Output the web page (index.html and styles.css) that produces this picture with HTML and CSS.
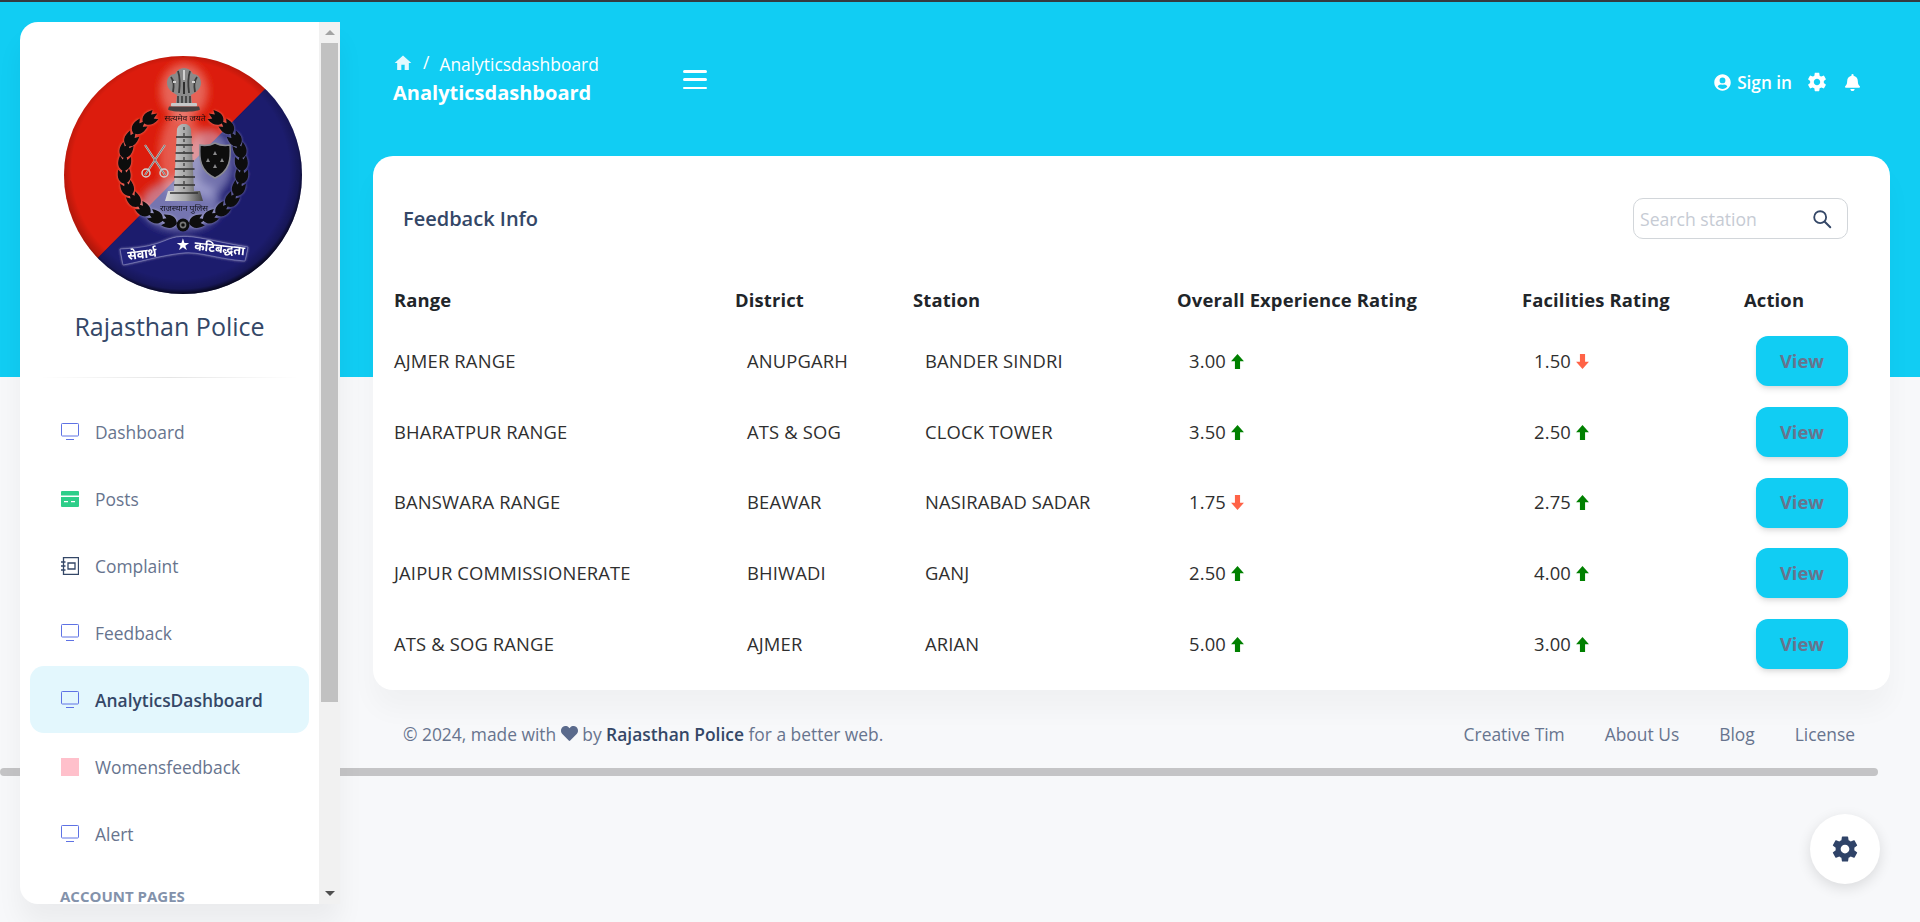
FILE: index.html
```html
<!DOCTYPE html>
<html lang="en">
<head>
<meta charset="utf-8">
<title>Analyticsdashboard</title>
<link rel="stylesheet" href="styles.css">
</head>
<body>
<svg class="defs" width="0" height="0" aria-hidden="true">
  <defs>
    <symbol id="i-monitor" viewBox="0 0 18 18">
      <rect x=".5" y=".5" width="17" height="12.5" rx=".8" fill="none" stroke="#5e72e4" stroke-width="1"/>
      <path d="M5 16.500h8" stroke="#5e72e4" stroke-width="1" fill="none"/>
    </symbol>
    <symbol id="i-gear" viewBox="0 0 24 24">
      <path d="M19.43 12.98c.04-.32.07-.64.07-.98s-.03-.66-.07-.98l2.11-1.65c.19-.15.24-.42.12-.64l-2-3.46c-.12-.22-.39-.3-.61-.22l-2.49 1c-.52-.4-1.08-.73-1.69-.98l-.38-2.65C14.46 2.18 14.25 2 14 2h-4c-.25 0-.46.18-.49.42l-.38 2.65c-.61.25-1.17.59-1.69.98l-2.49-1c-.23-.09-.49 0-.61.22l-2 3.46c-.13.22-.07.49.12.64l2.11 1.65c-.04.32-.07.65-.07.98s.03.66.07.98l-2.11 1.65c-.19.15-.24.42-.12.64l2 3.46c.12.22.39.3.61.22l2.49-1c.52.4 1.08.73 1.69.98l.38 2.65c.03.24.24.42.49.42h4c.25 0 .46-.18.49-.42l.38-2.65c.61-.25 1.17-.59 1.69-.98l2.49 1c.23.09.49 0 .61-.22l2-3.46c.12-.22.07-.49-.12-.64l-2.11-1.65zM12 15.500c-1.93 0-3.500-1.57-3.500-3.500s1.57-3.500 3.500-3.500 3.500 1.57 3.500 3.500-1.57 3.500-3.500 3.500z"/>
    </symbol>
    <symbol id="i-up" viewBox="0 0 12 14">
      <path d="M6 0l6 6.800H8.400V14H3.600V6.800H0z"/>
    </symbol>
    <symbol id="i-down" viewBox="0 0 12 14">
      <path d="M6 14L0 7.200h3.600V0h4.800v7.200H12z"/>
    </symbol>
    <g id="leaf">
      <path d="M0 8.400C-6 6.600-7.800 1.200-5.500-6.500L-2.400-2.900 0-8.600 2.400-2.900 5.500-6.500C7.800 1.200 6 6.600 0 8.400z"/>
    </g>
    <g id="half-wreath">
      <use href="#leaf" transform="translate(134.300 166.400) rotate(76)"/>
      <use href="#leaf" transform="translate(147.700 161.800) rotate(62)"/>
      <use href="#leaf" transform="translate(159.500 154.400) rotate(48)"/>
      <use href="#leaf" transform="translate(168.900 144.600) rotate(34)"/>
      <use href="#leaf" transform="translate(175.500 133.100) rotate(20)"/>
      <use href="#leaf" transform="translate(178.700 120.600) rotate(6)"/>
      <use href="#leaf" transform="translate(178.400 107.600) rotate(-8)"/>
      <use href="#leaf" transform="translate(177 95) rotate(-22)"/>
      <use href="#leaf" transform="translate(172 84) rotate(-34)"/>
      <use href="#leaf" transform="translate(164 72) rotate(-46)"/>
      <use href="#leaf" transform="translate(153 63) rotate(-58)"/>
    </g>
    <clipPath id="disc"><circle cx="120" cy="120" r="119"/></clipPath>
    <radialGradient id="rim" cx=".49" cy=".48" r=".525">
      <stop offset=".87" stop-color="#000" stop-opacity="0"/>
      <stop offset=".95" stop-color="#000" stop-opacity=".2"/>
      <stop offset="1" stop-color="#000" stop-opacity=".85"/>
    </radialGradient>
    <linearGradient id="stone" x1="0" x2="1" y1="0" y2="0">
      <stop offset="0" stop-color="#dedede"/>
      <stop offset=".55" stop-color="#a6a6a6"/>
      <stop offset="1" stop-color="#474747"/>
    </linearGradient>
    <filter id="soft" x="-30%" y="-30%" width="160%" height="160%"><feGaussianBlur stdDeviation="5"/></filter>
    <filter id="softer" x="-30%" y="-30%" width="160%" height="160%"><feGaussianBlur stdDeviation="1.800"/></filter>
    <filter id="lens"><feGaussianBlur stdDeviation=".4"/></filter>
  </defs>
</svg>

<div class="hscroll"></div>

<div class="shell">
  <aside class="sidebar">
    <div class="side-content">
      <svg class="logo" viewBox="0 0 240 240" role="img" aria-label="Rajasthan Police emblem">
        <g clip-path="url(#disc)" filter="url(#lens)">
          <rect width="240" height="240" fill="#1b1a6d"/>
          <polygon points="-10,248 202,34 202,-10 -10,-10" fill="#dc1b09"/>
          <ellipse cx="118" cy="150" rx="40" ry="26" fill="#c0c0e8" opacity=".55" filter="url(#soft)"/>
          <ellipse cx="146" cy="108" rx="24" ry="34" fill="#c9c9ec" opacity=".5" filter="url(#soft)"/>
          <ellipse cx="118" cy="100" rx="22" ry="44" fill="#fff" opacity=".28" filter="url(#soft)"/>
          <ellipse cx="121" cy="36" rx="24" ry="28" fill="#fff" opacity=".32" filter="url(#soft)"/>
          <use href="#half-wreath" fill="#fff" opacity=".45" filter="url(#softer)"/>
          <use href="#half-wreath" transform="translate(240 0) scale(-1 1)" fill="#fff" opacity=".45" filter="url(#softer)"/>
          <use href="#half-wreath" fill="#0b0b0e"/>
          <use href="#half-wreath" transform="translate(240 0) scale(-1 1)" fill="#0b0b0e"/>
          <circle cx="120" cy="170" r="6.500" fill="#0b0b0e"/>
          <circle cx="120" cy="170" r="3.400" fill="#777"/>
          <circle cx="120" cy="170" r="1.800" fill="#111"/>
          <!-- lion capital -->
          <path d="M104 28c0-6 4-9 8-9 2-4 5-6 9-6s7 2 9 6c4 0 8 3 8 9 0 5-4 9-10 12l1 8h-16l1-8c-6-3-10-7-10-12z" fill="#8a8a8a"/>
          <path d="M108 22c3 4 3 10 2 15M115 16c2 6 2 14 1 22M127 16c-2 6-2 14-1 22M134 22c-3 4-3 10-2 15" stroke="#3a3a3a" stroke-width="1.800" fill="none"/>
          <path d="M121 15v10M110 27h3M129 27h3" stroke="#d2d2d2" stroke-width="2" fill="none"/>
          <path d="M121 27v12" stroke="#2e2e2e" stroke-width="2" fill="none"/>
          <path d="M115 41v7M119 41v7M123 41v7M127 41v7" stroke="#2e2e2e" stroke-width="1.400" fill="none"/>
          <rect x="108" y="48" width="26" height="3.500" rx="1" fill="#c9c9c9"/>
          <path d="M106 51.500h30l1 3c-3 3-29 3-32 0z" fill="#46413f"/>
          <text class="logo-hi logo-motto" x="122" y="66" text-anchor="middle">सत्यमेव जयते</text>
          <!-- tower -->
          <path d="M114 74c1-3 3-5 7-5s6 2 7 5l3 62h6l3 10h-38l3-10h6z" fill="url(#stone)"/>
          <path d="M113 82h16M113 90h17M112.500 98h18M112 106h19M111.500 114h20M111 122h21M111 130h21M107 138h28" stroke="#2f2f2f" stroke-width="1.500" fill="none"/>
          <path d="M121 72v62" stroke="#444" stroke-width="1.400" stroke-dasharray="3 3" fill="none"/>
          <text class="logo-hi logo-city" x="121" y="156" text-anchor="middle">राजस्थान पुलिस</text>
          <!-- crossed swords -->
          <path d="M82 90l20 30M102 90L82 120" stroke="#c9c4c4" stroke-width="2.200" fill="none"/>
          <path d="M82 90l20 30M102 90L82 120" stroke="#555" stroke-width=".7" fill="none"/>
          <circle cx="83" cy="118" r="4" fill="none" stroke="#cfcfcf" stroke-width="1.500"/>
          <circle cx="101" cy="118" r="4" fill="none" stroke="#cfcfcf" stroke-width="1.500"/>
          <!-- shield -->
          <path d="M152 88c6 3 10 3 15 2 1 14 0 26-15 33-15-7-16-19-15-33 5 1 9 1 15-2z" fill="#0c0c10" stroke="#8a8a92" stroke-width="1.500"/>
          <path d="M152 96l2 4h-4zM145 103l2 4h-4zM159 103l2 4h-4zM152 109l2 4h-4z" fill="#8a8a8a"/>
          <!-- ribbon -->
          <path d="M57 194C80 193 92 190 106 184 125 177 145 186 185 192L182 206C155 204 135 196 120 198 100 200 80 206 60 210Z" fill="#fff" opacity=".6" filter="url(#softer)"/>
          <path d="M57 194C80 193 92 190 106 184 125 177 145 186 185 192L182 206C155 204 135 196 120 198 100 200 80 206 60 210Z" fill="#23237c" stroke="#b9b9e2" stroke-width=".4"/>
          <text class="logo-hi logo-band" x="65" y="205" transform="rotate(-7 65 205)">सेवार्थ</text>
          <text class="logo-star" x="120" y="195" text-anchor="middle">★</text>
          <text class="logo-hi logo-band" x="131" y="195" transform="rotate(6 131 195)">कटिबद्धता</text>
        </g>
        <circle cx="120" cy="120" r="119" fill="url(#rim)"/>
      </svg>
      <h1 class="brand">Rajasthan Police</h1>
      <div class="side-rule"></div>
      <nav class="side-nav">
        <a class="side-link"><svg class="side-icon"><use href="#i-monitor"/></svg>Dashboard</a>
        <a class="side-link">
          <svg class="side-icon" viewBox="0 0 18 18"><path d="M1 1h16a1 1 0 0 1 1 1v3.500H0V2a1 1 0 0 1 1-1zM0 7h18v9a1 1 0 0 1-1 1H1a1 1 0 0 1-1-1z" fill="#2dce89"/><path d="M3 11h4v1.300H3zM10 11h4v1.300h-4z" fill="#fff"/></svg>Posts
        </a>
        <a class="side-link">
          <svg class="side-icon" viewBox="0 0 18 18"><path d="M2.500 .7h15v16.600h-15z" fill="none" stroke="#344767" stroke-width="1.300"/><path d="M7 6h7v6H7z" fill="none" stroke="#344767" stroke-width="1.300"/><path d="M0 5h4.500M0 9h4.500M0 13h4.500" stroke="#344767" stroke-width="1.300"/></svg>Complaint
        </a>
        <a class="side-link"><svg class="side-icon"><use href="#i-monitor"/></svg>Feedback</a>
        <a class="side-link is-active"><svg class="side-icon"><use href="#i-monitor"/></svg>AnalyticsDashboard</a>
        <a class="side-link"><span class="side-icon pink-square"></span>Womensfeedback</a>
        <a class="side-link"><svg class="side-icon"><use href="#i-monitor"/></svg>Alert</a>
      </nav>
      <div class="side-heading">ACCOUNT PAGES</div>
    </div>
    <div class="side-scrollbar">
      <span class="sb-btn"><i class="tri tri-up"></i></span>
      <span class="sb-track"><span class="sb-thumb"></span></span>
      <span class="sb-btn"><i class="tri tri-down"></i></span>
    </div>
  </aside>

  <main class="main">
    <header class="topbar">
      <div class="crumbs">
        <div class="crumb-line">
          <svg class="home" viewBox="0 0 24 24"><path d="M10 20.500v-6.500h4v6.500h5v-8.500h3L12 3 2 12h3v8.500z"/></svg>
          <span class="crumb-sep">/</span>
          <span class="crumb-page">Analyticsdashboard</span>
        </div>
        <div class="crumb-title">Analyticsdashboard</div>
      </div>
      <div class="burger"><i></i><i></i><i></i></div>
      <div class="top-actions">
        <a class="signin">
          <svg class="top-icon" viewBox="0 0 512 512"><path d="M256 8C119 8 8 119 8 256s111 248 248 248 248-111 248-248S393 8 256 8zm0 96a88 88 0 1 1 0 176 88 88 0 0 1 0-176zm0 344c-59 0-111-27-146-69 19-36 55-61 98-61 3 0 5 0 8 1 13 4 26 7 40 7s27-3 40-7c3-1 5-1 8-1 43 0 79 25 98 61-35 42-87 69-146 69z"/></svg>
          Sign in
        </a>
        <svg class="top-gear"><use href="#i-gear"/></svg>
        <svg class="top-bell" viewBox="0 0 448 512"><path d="M224 512c35 0 64-29 64-64H160c0 35 29 64 64 64zm215-150c-19-21-55-52-55-154 0-78-54-140-128-155V32a32 32 0 1 0-64 0v21C118 68 64 130 64 208c0 102-36 133-55 154-6 6-9 14-9 22 0 16 13 32 32 32h384c19 0 32-16 32-32 0-8-3-16-9-22z"/></svg>
      </div>
    </header>

    <section class="card">
      <div class="card-head">
        <h2 class="card-title">Feedback Info</h2>
        <div class="search">
          <input class="search-input" type="text" placeholder="Search station">
          <svg class="search-icon" viewBox="0 0 24 24"><circle cx="10" cy="10" r="6.500" fill="none" stroke="#344767" stroke-width="2"/><path d="M15 15l6 6" stroke="#344767" stroke-width="2.200" stroke-linecap="round"/></svg>
        </div>
      </div>
      <table class="tbl">
        <colgroup>
          <col class="c-range"><col class="c-district"><col class="c-station"><col class="c-overall"><col class="c-fac"><col class="c-action">
        </colgroup>
        <thead>
          <tr><th>Range</th><th>District</th><th>Station</th><th>Overall Experience Rating</th><th>Facilities Rating</th><th>Action</th></tr>
        </thead>
        <tbody>
          <tr><td>AJMER RANGE</td><td>ANUPGARH</td><td>BANDER SINDRI</td>
            <td>3.00 <svg class="arrow good"><use href="#i-up"/></svg></td>
            <td>1.50 <svg class="arrow bad"><use href="#i-down"/></svg></td>
            <td class="act"><button class="view">View</button></td></tr>
          <tr><td>BHARATPUR RANGE</td><td>ATS &amp; SOG</td><td>CLOCK TOWER</td>
            <td>3.50 <svg class="arrow good"><use href="#i-up"/></svg></td>
            <td>2.50 <svg class="arrow good"><use href="#i-up"/></svg></td>
            <td class="act"><button class="view">View</button></td></tr>
          <tr><td>BANSWARA RANGE</td><td>BEAWAR</td><td>NASIRABAD SADAR</td>
            <td>1.75 <svg class="arrow bad"><use href="#i-down"/></svg></td>
            <td>2.75 <svg class="arrow good"><use href="#i-up"/></svg></td>
            <td class="act"><button class="view">View</button></td></tr>
          <tr><td>JAIPUR COMMISSIONERATE</td><td>BHIWADI</td><td>GANJ</td>
            <td>2.50 <svg class="arrow good"><use href="#i-up"/></svg></td>
            <td>4.00 <svg class="arrow good"><use href="#i-up"/></svg></td>
            <td class="act"><button class="view">View</button></td></tr>
          <tr><td>ATS &amp; SOG RANGE</td><td>AJMER</td><td>ARIAN</td>
            <td>5.00 <svg class="arrow good"><use href="#i-up"/></svg></td>
            <td>3.00 <svg class="arrow good"><use href="#i-up"/></svg></td>
            <td class="act"><button class="view">View</button></td></tr>
        </tbody>
      </table>
    </section>

    <footer class="foot">
      <div class="foot-copy">© 2024, made with <svg class="heart" viewBox="0 0 512 512"><path d="M462 62c-55-46-136-38-186 14l-20 20-20-20C186 24 105 16 50 62-13 116-16 212 40 270l193 199c12 13 33 13 45 0l194-199c56-58 53-154-10-208z"/></svg> by <b>Rajasthan Police</b> for a better web.</div>
      <div class="foot-links"><a>Creative Tim</a><a>About Us</a><a>Blog</a><a>License</a></div>
    </footer>
  </main>
</div>

<a class="fab"><svg class="fab-icon"><use href="#i-gear"/></svg></a>
</body>
</html>
```

FILE: styles.css
```css
* { box-sizing: border-box; }
html, body { height: 100%; }
body {
  margin: 0;
  height: 922px;
  overflow: hidden;
  position: relative;
  border-top: 2px solid #343a40;
  background: linear-gradient(#11cdf3 0, #11cdf3 377px, #f7f8fa 377px);
  font-family: "Open Sans", "Noto Sans", sans-serif;
  font-size: 17.400px;
  color: #67748e;
}
.defs { position: absolute; }
a { color: inherit; text-decoration: none; }

.hscroll {
  position: absolute;
  left: 0; top: 766px;
  width: 1878px; height: 8px;
  background: #c4c4c6;
  border-radius: 4px;
}

.shell { position: relative; display: flex; padding-left: 20px; padding-top: 20px; }

/* sidebar */
.sidebar {
  flex: 0 0 320px;
  height: 882px;
  display: flex;
  background: #fff;
  border-radius: 18px 0 0 18px;
  overflow: hidden;
  box-shadow: 0 20px 27px rgba(0,0,0,.05);
}
.side-content { flex: 1; min-width: 0; overflow: hidden; padding-top: 33px; }
.logo { display: block; width: 240px; height: 240px; margin-left: 43px; }
.logo-hi { font-family: "Noto Sans", "Noto Sans Devanagari", sans-serif; }
.logo-motto { font-size: 8.500px; fill: #1d1010; }
.logo-city { font-size: 8.500px; fill: #15151f; }
.logo-band { font-size: 12.500px; font-weight: 700; fill: #fff; }
.logo-star { font-size: 16px; fill: #fff; font-family: "DejaVu Sans", sans-serif; }
.brand {
  margin: 15px 0 0;
  font-size: 25px; font-weight: 400; line-height: 32px;
  text-align: center;
  color: #344767;
}
.side-rule {
  height: 1px; margin: 35px 20px 20px;
  background: linear-gradient(90deg, rgba(0,0,0,0), rgba(0,0,0,.1), rgba(0,0,0,0));
}
.side-link {
  display: flex; align-items: center; gap: 16px;
  height: 67px;
  margin: 0 10px;
  padding-left: 31px;
  border-radius: 14px;
  color: #67748e;
  font-size: 17.400px;
}
.side-link.is-active { background: #e3f7fd; color: #344767; font-weight: 600; }
.side-icon { display: block; width: 18px; height: 18px; flex: none; }
.pink-square { background: #ffc0cb; }
.side-heading {
  margin-top: 21px; padding-left: 40px;
  font-size: 15px; line-height: 16px; font-weight: 700;
  color: #8392ab;
}

.side-scrollbar { flex: 0 0 21px; display: flex; flex-direction: column; background: #f1f1f1; }
.sb-btn { flex: 0 0 21px; display: flex; align-items: center; justify-content: center; }
.sb-track { flex: 1; padding: 0 2px; min-height: 0; }
.sb-thumb { display: block; height: 659px; background: #c1c1c1; }
.tri { display: block; width: 0; height: 0; border-left: 5px solid transparent; border-right: 5px solid transparent; }
.tri-up { border-bottom: 5px solid #a3a3a3; }
.tri-down { border-top: 5px solid #505050; }

/* main */
.main { flex: 1; min-width: 0; padding: 0 30px 0 33px; }
.topbar { display: flex; align-items: flex-start; height: 134px; padding-top: 29px; color: #fff; }
.crumbs { width: 209px; padding-left: 20px; box-sizing: content-box; flex: none; }
.crumb-line { display: flex; align-items: center; height: 24px; margin-top: 1px; }
.home { width: 20px; height: 20px; fill: #e4f9fe; flex: none; margin-top: -3px; }
.crumb-sep { margin: -5px 10px 0 10px; font-size: 17.400px; }
.crumb-page { font-size: 17.400px; white-space: nowrap; }
.crumb-title { font-size: 20px; font-weight: 700; line-height: 28px; margin-top: 3px; white-space: nowrap; }
.burger { display: flex; flex-direction: column; gap: 5.500px; width: 24px; margin: 19px 0 0 81px; }
.burger i { display: block; height: 2.800px; background: #fff; border-radius: 2px; }
.top-actions { margin-left: auto; margin-right: 30px; display: flex; align-items: center; height: 24px; margin-top: 19px; }
.signin { display: flex; align-items: center; gap: 6px; font-weight: 600; font-size: 17.200px; }
.top-icon { width: 17px; height: 17px; fill: #fff; }
.top-gear { width: 22px; height: 22px; fill: #fff; margin-left: 14px; }
.top-bell { width: 15px; height: 17px; fill: #fff; margin-left: 17px; }

.card {
  background: #fff;
  border-radius: 20px;
  padding: 42px 42px 11px 21px;
  box-shadow: 0 20px 27px rgba(0,0,0,.03);
}
.card-head { display: flex; justify-content: space-between; align-items: center; padding-left: 9px; }
.card-title { margin: 0; font-size: 20px; font-weight: 600; color: #344767; }
.search {
  display: flex; align-items: center;
  width: 215px; height: 41px;
  padding: 0 14px 0 6px;
  border: 1px solid #d2d6da;
  border-radius: 10px;
}
.search-input {
  flex: 1; min-width: 0; border: 0; outline: 0; padding: 0;
  font: 17.600px "Open Sans", sans-serif; color: #344767; background: none;
}
.search-input::placeholder { color: #c6cbd4; opacity: 1; }
.search-icon { width: 22px; height: 22px; flex: none; }

.tbl { width: 1454px; table-layout: fixed; border-collapse: collapse; margin-top: 35px; color: #2f2f2f; letter-spacing: .15px; }
.c-range { width: 341px; }
.c-district { width: 178px; }
.c-station { width: 264px; }
.c-overall { width: 345px; }
.c-fac { width: 222px; }
.c-action { width: 104px; }
.tbl th { height: 52px; padding: 0 0 2px; text-align: left; font-weight: 700; color: #212529; font-size: 18.400px; }
.tbl td { height: 70.700px; padding: 0 0 2px 12px; font-size: 18.400px; white-space: nowrap; }
.tbl td:first-child { padding-left: 0; }
.tbl td.act { padding: 0; text-align: right; }
.arrow { display: inline-block; width: 13px; height: 15px; vertical-align: -1px; }
.good { fill: #008000; }
.bad { fill: #ff6347; }
.view {
  width: 92px; height: 50px;
  padding: 0 0 2px;
  border: 0; border-radius: 12px;
  background: #11cdf3;
  color: #67748e;
  font: 700 18.400px "Open Sans", sans-serif;
  box-shadow: 0 4px 7px -1px rgba(0,0,0,.11), 0 2px 4px -1px rgba(0,0,0,.07);
}

.foot { display: flex; justify-content: space-between; align-items: center; margin-top: 32px; padding: 0 35px 0 30px; line-height: 24px; }
.foot b { font-weight: 600; color: #344767; }
.heart { width: 17px; height: 17px; fill: #5a6a8c; vertical-align: -1px; }
.foot-links { display: flex; gap: 40px; }

.fab {
  position: absolute;
  right: 40px; top: 812px;
  width: 70px; height: 70px;
  display: flex; align-items: center; justify-content: center;
  background: #fff;
  border-radius: 50%;
  box-shadow: 0 4px 14px rgba(0,0,0,.12);
}
.fab-icon { width: 30px; height: 30px; fill: #2f4368; }
```
